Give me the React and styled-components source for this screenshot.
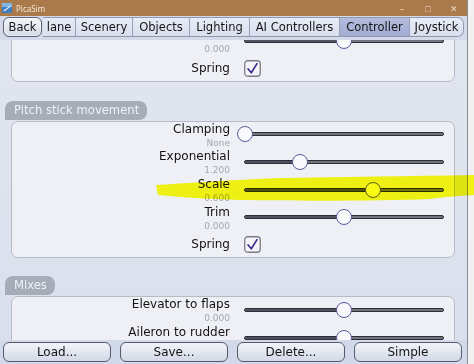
import styled, { createGlobalStyle } from 'styled-components'

const GlobalStyle = createGlobalStyle`
  html, body {
    margin: 0;
    padding: 0;
  }
  body {
    width: 474px;
    height: 364px;
    overflow: hidden;
    background: #eeeeee;
    font-family: "DejaVu Sans", Verdana, sans-serif;
  }
`

const tabs = [
  { name: 'lane', w: 33 },
  { name: 'Scenery', w: 57 },
  { name: 'Objects', w: 57 },
  { name: 'Lighting', w: 60 },
  { name: 'AI Controllers', w: 90 },
  { name: 'Controller', w: 70, active: true },
  { name: 'Joystick', w: 53 },
]

function App() {
  return (
    <Screen>
      <GlobalStyle />
      <Window>
        <TitleBar>
          <AppIcon />
          <Title>PicaSim</Title>
          <WinControls>
            <WinButton>–</WinButton>
            <WinButton>□</WinButton>
            <WinButton>✕</WinButton>
          </WinControls>
        </TitleBar>

        <TabBar>
          <BackButton>Back</BackButton>
          <TabGroup>
            {tabs.map(t => (
              <Tab key={t.name} $w={t.w} $active={t.active}>{t.name}</Tab>
            ))}
          </TabGroup>
        </TabBar>

        <Content>
          <Scroller>
            {/* first group is scrolled up, its label sits under the tab bar */}
            <Panel>
              <SliderRow label="" value="0.000" pos={0.5} />
              <CheckRow label="Spring" />
            </Panel>

            <GroupHeader $top={19}>Pitch stick movement</GroupHeader>
            <Panel>
              <SliderRow label="Clamping" value="None" pos={0} />
              <SliderRow label="Exponential" value="1.200" pos={0.28} />
              <SliderRow label="Scale" value="0.600" pos={0.645} />
              <SliderRow label="Trim" value="0.000" pos={0.5} />
              <CheckRow label="Spring" />
            </Panel>

            <GroupHeader $top={18}>Mixes</GroupHeader>
            <Panel>
              <SliderRow label="Elevator to flaps" value="0.000" pos={0.5} />
              <SliderRow label="Aileron to rudder" value="" pos={0.5} />
            </Panel>
          </Scroller>
        </Content>

        <ButtonBar>
          <Button>Load...</Button>
          <Button>Save...</Button>
          <Button>Delete...</Button>
          <Button>Simple</Button>
        </ButtonBar>
      </Window>
      <Outside />

      <Highlight viewBox="0 0 474 364">
        <path d="M156 185 C 190 183 230 180 280 178 C 340 177 410 176 474 175 L 474 195 C 455 196 445 197 430 199 C 380 201 300 201 240 200 C 205 199 180 197 158 195 Z" fill="#ffff14" />
      </Highlight>
    </Screen>
  )
}

function SliderRow({ label, value, pos }) {
  return (
    <Row>
      <Label>{label}</Label>
      <Value>{value}</Value>
      <Control>
        <Track>
          <Fill style={{ width: `${pos * 100}%` }} />
          <Thumb style={{ left: `${pos * 100}%` }} />
        </Track>
      </Control>
    </Row>
  )
}

function CheckRow({ label }) {
  return (
    <CheckLine>
      <Label>{label}</Label>
      <CheckBox viewBox="0 0 17 17">
        <rect x="0.75" y="0.75" width="15.5" height="15.5" rx="3" fill="#f5f5f9" stroke="#7a7c86" strokeWidth="1.3" />
        <path d="M4 8.8 L7.3 12.8 L13 3.6" fill="none" stroke="#3a2f8c" strokeWidth="1.7" strokeLinecap="round" strokeLinejoin="round" />
      </CheckBox>
    </CheckLine>
  )
}

function AppIcon() {
  return (
    <IconSvg viewBox="0 0 10 10">
      <rect width="10" height="10" fill="#3d7fc4" />
      <rect width="10" height="4" fill="#7fb6e6" />
      <path d="M1 8 L9 2 L8 4 L3 8 Z" fill="#f4f4f4" />
    </IconSvg>
  )
}

export default App

const Screen = styled.div`
  position: relative;
  display: flex;
  width: 474px;
  height: 364px;
  overflow: hidden;
`

const Window = styled.div`
  width: 467px;
  display: flex;
  flex-direction: column;
  border-right: 1px solid #8a8d96;
  background: linear-gradient(180deg, #e2e6f0 0%, #dde2ee 60%, #d9dfed 100%);
`

const Outside = styled.div`
  flex: 1;
  background: #f1f1f1;
`

const TitleBar = styled.div`
  height: 16px;
  flex: none;
  display: flex;
  align-items: center;
  padding-left: 2px;
  background: #aa7a4b;
  color: #f5e8da;
  font-family: "Noto Sans", sans-serif;
  font-size: 8px;
`

const IconSvg = styled.svg`
  width: 10px;
  height: 10px;
`

const Title = styled.span`
  margin-left: 4px;
`

const WinControls = styled.div`
  margin-left: auto;
  display: flex;
`

const WinButton = styled.span`
  width: 26px;
  text-align: center;
  font-size: 9px;
  color: #f1d9c2;
`

const TabBar = styled.div`
  height: 24px;
  flex: none;
  display: flex;
  align-items: flex-start;
  padding-top: 1px;
  box-sizing: border-box;
  background: #d4dae9;
`

const BackButton = styled.div`
  width: 39px;
  height: 20px;
  margin-left: 3px;
  box-sizing: border-box;
  border: 1px solid #5e6270;
  border-radius: 6px;
  background: linear-gradient(180deg, #f3f5fa, #d6dbe8);
  font-size: 11.5px;
  line-height: 18px;
  text-align: center;
  color: #151515;
  box-shadow: inset 0 0 0 1px #ffffff80;
`

const TabGroup = styled.div`
  display: flex;
  margin-left: 1px;
  height: 20px;
  border: 1px solid #9098ad;
  border-left: none;
  border-radius: 0 7px 7px 0;
  overflow: hidden;
  box-sizing: border-box;
`

const Tab = styled.div`
  width: ${p => p.$w}px;
  box-sizing: border-box;
  border-right: 1px solid #9aa2b7;
  background: ${p => p.$active
    ? 'linear-gradient(180deg, #b3bcdd, #a2acd3)'
    : 'linear-gradient(180deg, #e8ecf6, #d9dfee)'};
  font-size: 11.5px;
  line-height: 18px;
  text-align: center;
  color: #151515;
  white-space: nowrap;

  &:last-child {
    border-right: none;
  }
`

const Content = styled.div`
  flex: 1;
  overflow: hidden;
`

const Scroller = styled.div`
  margin-top: -13px;
  padding-left: 5px;
  display: flex;
  flex-direction: column;
  align-items: flex-start;
`

const GroupHeader = styled.div`
  margin-top: ${p => p.$top}px;
  margin-bottom: 1px;
  height: 19px;
  padding: 0 8px 0 9px;
  border-radius: 8px 8px 8px 0;
  background: #a6acb8;
  color: #eef1f7;
  font-size: 11.6px;
  line-height: 19px;
`

const Panel = styled.div`
  width: 444px;
  margin-left: 6px;
  box-sizing: border-box;
  border: 1px solid #b6bbc6;
  border-radius: 7px;
  background: #eef0f5;
`

const Row = styled.div`
  display: grid;
  grid-template-columns: 218px 1fr;
  grid-template-rows: 15px 12.7px;
  column-gap: 7px;
`

const Label = styled.div`
  grid-column: 1;
  grid-row: 1;
  text-align: right;
  font-size: 12px;
  line-height: 15px;
  color: #131313;
  white-space: nowrap;
`

const Value = styled.div`
  grid-column: 1;
  grid-row: 2;
  text-align: right;
  font-size: 9px;
  line-height: 12.7px;
  color: #a4a6ae;
`

const Control = styled.div`
  grid-column: 2;
  grid-row: 1 / span 2;
  padding-left: 7px;
`

const Track = styled.div`
  position: relative;
  width: 200px;
  height: 4px;
  margin-top: 10.5px;
  box-sizing: border-box;
  border: 1px solid #2c2d35;
  border-radius: 2px;
  background: #72757f;
`

const Fill = styled.div`
  height: 100%;
  background: #4f5262;
`

const Thumb = styled.div`
  position: absolute;
  top: 50%;
  width: 16px;
  height: 16px;
  box-sizing: border-box;
  transform: translate(-50%, -50%);
  border: 1.5px solid #5a5a9c;
  border-radius: 50%;
  background: #fafafd;
`

const CheckLine = styled.div`
  display: grid;
  grid-template-columns: 218px 1fr;
  column-gap: 7px;
  height: 25px;
  align-items: center;
`

const CheckBox = styled.svg`
  grid-column: 2;
  width: 17px;
  height: 17px;
  margin-left: 7px;
`

const ButtonBar = styled.div`
  height: 24px;
  flex: none;
  display: flex;
  gap: 9px;
  padding: 2px 3px;
  box-sizing: border-box;
  background: #d2d9ea;
`

const Button = styled.div`
  width: 108px;
  height: 20px;
  box-sizing: border-box;
  border: 1px solid #575b68;
  border-radius: 6px;
  background: linear-gradient(180deg, #f2f4f9, #d3d9e7);
  font-size: 12px;
  line-height: 18px;
  text-align: center;
  color: #151515;
`

const Highlight = styled.svg`
  position: absolute;
  left: 0;
  top: 0;
  width: 474px;
  height: 364px;
  pointer-events: none;
  mix-blend-mode: multiply;
`
